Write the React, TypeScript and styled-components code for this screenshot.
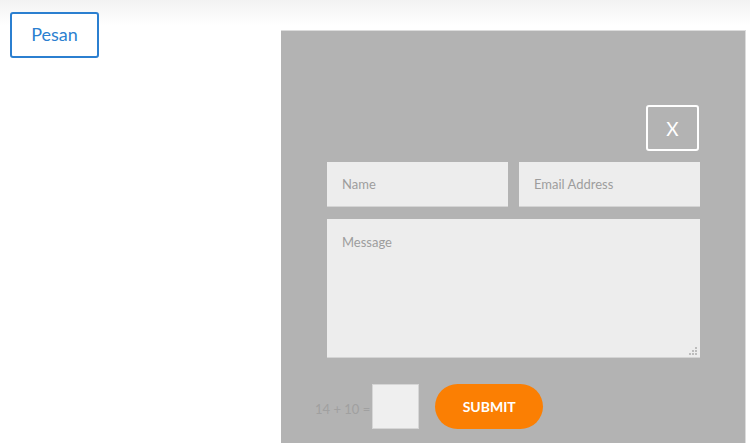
import { FC } from "react";
import styled, { createGlobalStyle } from "styled-components";

const GlobalStyle = createGlobalStyle`
  html, body {
    margin: 0;
    padding: 0;
    background: #fff;
    font-family: Lato, "Open Sans", sans-serif;
  }
  * { box-sizing: border-box; }
`;

const Page = styled.div`
  display: flex;
  align-items: flex-start;
  height: 443px;
  overflow: hidden;
  background: linear-gradient(to bottom, #f2f2f2 0px, #ffffff 26px, #ffffff 100%);
`;

const OpenButton = styled.button`
  margin: 12px 0 0 10px;
  width: 89px;
  height: 46px;
  border: 2px solid #2b7fd0;
  border-radius: 3px;
  background: #fff;
  color: #2b7fd0;
  font-family: Lato, sans-serif;
  font-size: 18px;
  padding: 0 0 2px;
  cursor: pointer;
`;

const Panel = styled.div`
  margin: 30px 4px 0 auto;
  width: 465px;
  height: 440px;
  background: #b3b3b3;
  border-top: 1px solid #dcdcdc;
  border-right: 1px solid #dcdcdc;
  padding: 74px 46px 0 46px;
  display: flex;
  flex-direction: column;
`;

const CloseButton = styled.button`
  align-self: flex-end;
  width: 53px;
  height: 46px;
  border: 2px solid #fff;
  border-radius: 3px;
  background: transparent;
  color: #fff;
  font-family: Lato, sans-serif;
  font-size: 19px;
  padding: 0;
  margin-bottom: 11px;
`;

const Grid = styled.div`
  display: grid;
  grid-template-columns: 181px 181px;
  column-gap: 11px;
  row-gap: 12px;
`;

const Field = styled.input`
  height: 45px;
  border: none;
  border-bottom: 1px solid #d4d4d4;
  background: #ededed;
  padding: 0 15px;
  font-family: Lato, sans-serif;
  font-size: 13px;
  color: #555;
  outline: none;
  &::placeholder { color: #9d9d9d; }
`;

const MessageWrap = styled.div`
  grid-column: 1 / span 2;
  position: relative;
  height: 139px;
`;

const MessageArea = styled.textarea`
  display: block;
  width: 100%;
  height: 100%;
  border: none;
  border-bottom: 1px solid #d4d4d4;
  background: #ededed;
  padding: 15px 15px;
  font-family: Lato, sans-serif;
  font-size: 13px;
  resize: none;
  outline: none;
  &::placeholder { color: #9d9d9d; }
`;

const Grip = styled.svg`
  position: absolute;
  right: 3px;
  bottom: 3px;
  pointer-events: none;
`;

const CaptchaRow = styled.div`
  display: flex;
  align-items: center;
  margin: 26px 0 0 -12px;
`;

const CaptchaLabel = styled.span`
  font-size: 13px;
  color: #a0a0a0;
  margin-top: 4px;
  margin-right: 2px;
`;

const CaptchaInput = styled.input`
  width: 47px;
  height: 45px;
  border: 1px solid #d6d6d6;
  background: #efefef;
  outline: none;
`;

const SubmitButton = styled.button`
  margin-left: 16px;
  width: 108px;
  height: 45px;
  border: none;
  border-radius: 23px;
  background: #fb7f03;
  color: #fff;
  font-family: Lato, sans-serif;
  font-weight: 700;
  font-size: 14px;
  padding: 0;
`;

const App: FC = () => {
  return (
    <>
      <GlobalStyle />
      <Page>
        <OpenButton>Pesan</OpenButton>
        <Panel>
          <CloseButton>X</CloseButton>
          <Grid>
            <Field placeholder="Name" />
            <Field placeholder="Email Address" />
            <MessageWrap>
              <MessageArea placeholder="Message" />
              <Grip width="8" height="8" viewBox="0 0 8 8">
                <g fill="#bdbdbd">
                  <rect x="6" y="0" width="2" height="2" />
                  <rect x="3" y="3" width="2" height="2" />
                  <rect x="6" y="3" width="2" height="2" />
                  <rect x="0" y="6" width="2" height="2" />
                  <rect x="3" y="6" width="2" height="2" />
                  <rect x="6" y="6" width="2" height="2" />
                </g>
              </Grip>
            </MessageWrap>
          </Grid>
          <CaptchaRow>
            <CaptchaLabel>14 + 10 =</CaptchaLabel>
            <CaptchaInput />
            <SubmitButton>SUBMIT</SubmitButton>
          </CaptchaRow>
        </Panel>
      </Page>
    </>
  );
};

export default App;
